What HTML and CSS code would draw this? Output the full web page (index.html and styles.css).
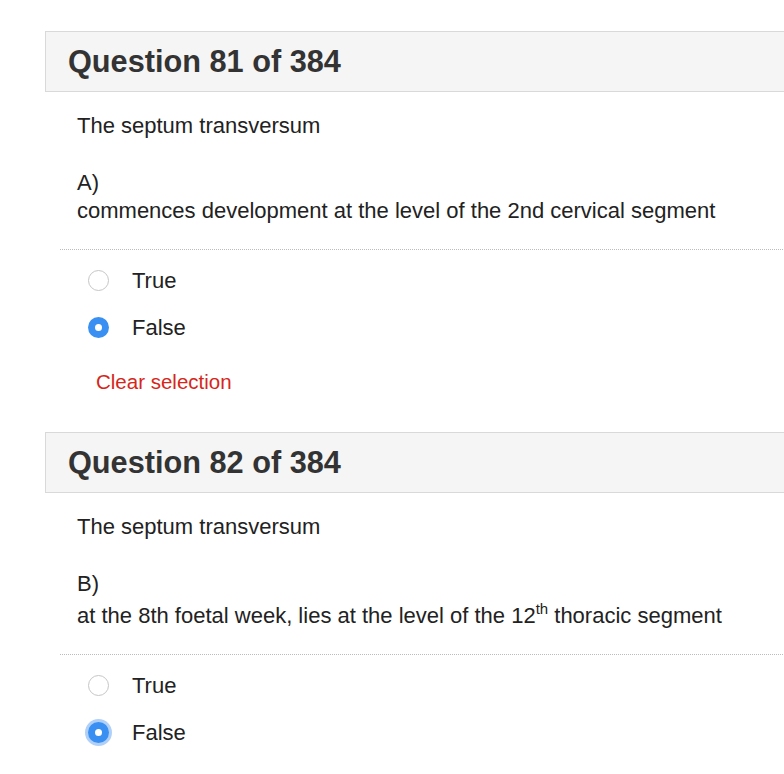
FILE: index.html
```html
<!DOCTYPE html>
<html>
<head>
<meta charset="utf-8">
<link rel="stylesheet" href="styles.css">
</head>
<body>
<div class="page">
  <section class="question">
    <div class="q-header"><h2>Question 81 of 384</h2></div>
    <div class="q-body">
      <p class="stem">The septum transversum</p>
      <p class="part"><span class="letter">A)</span><br>commences development at the level of the 2nd cervical segment</p>
    </div>
    <div class="divider"></div>
    <div class="options">
      <label class="option"><span class="radio"></span><span class="opt-text">True</span></label>
      <label class="option"><span class="radio checked"></span><span class="opt-text">False</span></label>
    </div>
    <a class="clear">Clear selection</a>
  </section>
  <section class="question">
    <div class="q-header"><h2>Question 82 of 384</h2></div>
    <div class="q-body">
      <p class="stem">The septum transversum</p>
      <p class="part"><span class="letter">B)</span><br>at the 8th foetal week, lies at the level of the 12<sup>th</sup> thoracic segment</p>
    </div>
    <div class="divider"></div>
    <div class="options">
      <label class="option"><span class="radio"></span><span class="opt-text">True</span></label>
      <label class="option"><span class="radio checked focus"></span><span class="opt-text">False</span></label>
    </div>
  </section>
</div>
</body>
</html>
```
FILE: styles.css
```css
html, body {
  margin: 0;
  padding: 0;
  background: #fff;
  overflow: hidden;
}
body {
  font-family: "Liberation Sans", Arial, Helvetica, sans-serif;
  color: #222;
}
.page {
  padding-top: 31px;
  padding-left: 45px;
  width: 800px;
}
.question {
  display: flex;
  flex-direction: column;
  align-items: flex-start;
  margin-bottom: 36px;
}
.q-header {
  box-sizing: border-box;
  width: 100%;
  height: 61px;
  background: #f5f5f5;
  border: 1px solid #d9d9d9;
  display: flex;
  align-items: center;
  padding-left: 22px;
  padding-top: 1px;
}
.q-header h2 {
  margin: 0;
  font-size: 30.7px;
  font-weight: bold;
  color: #333;
  line-height: 1;
}
.q-body {
  padding-left: 32px;
  padding-top: 20px;
  font-size: 22px;
  line-height: 28px;
}
.q-body p {
  margin: 0;
}
.stem {
  margin-bottom: 29px !important;
}
.part sup {
  font-size: 15px;
  line-height: 22px;
  vertical-align: 9px;
}
.divider {
  align-self: stretch;
  margin-left: 15px;
  margin-top: 24px;
  border-top: 1px dotted #bbb;
}
.options {
  padding-top: 7px;
  padding-left: 43px;
  display: flex;
  flex-direction: column;
}
.option {
  height: 47px;
  display: flex;
  align-items: center;
  font-size: 22px;
  color: #222;
}
.radio {
  box-sizing: border-box;
  width: 21px;
  height: 21px;
  border-radius: 50%;
  border: 1px solid #c6c6c6;
  background: #fff;
  margin-right: 23px;
  display: flex;
  align-items: center;
  justify-content: center;
}
.radio.checked {
  border: none;
  background: #3a8ff2;
}
.radio.checked::after {
  content: "";
  width: 7px;
  height: 7px;
  border-radius: 50%;
  background: #fff;
}
.radio.focus {
  box-shadow: 0 0 0 3px rgba(80, 150, 240, 0.45);
}
.clear {
  margin-top: 17px;
  margin-left: 51px;
  font-size: 20.5px;
  line-height: 28px;
  color: #d6261a;
}
```
